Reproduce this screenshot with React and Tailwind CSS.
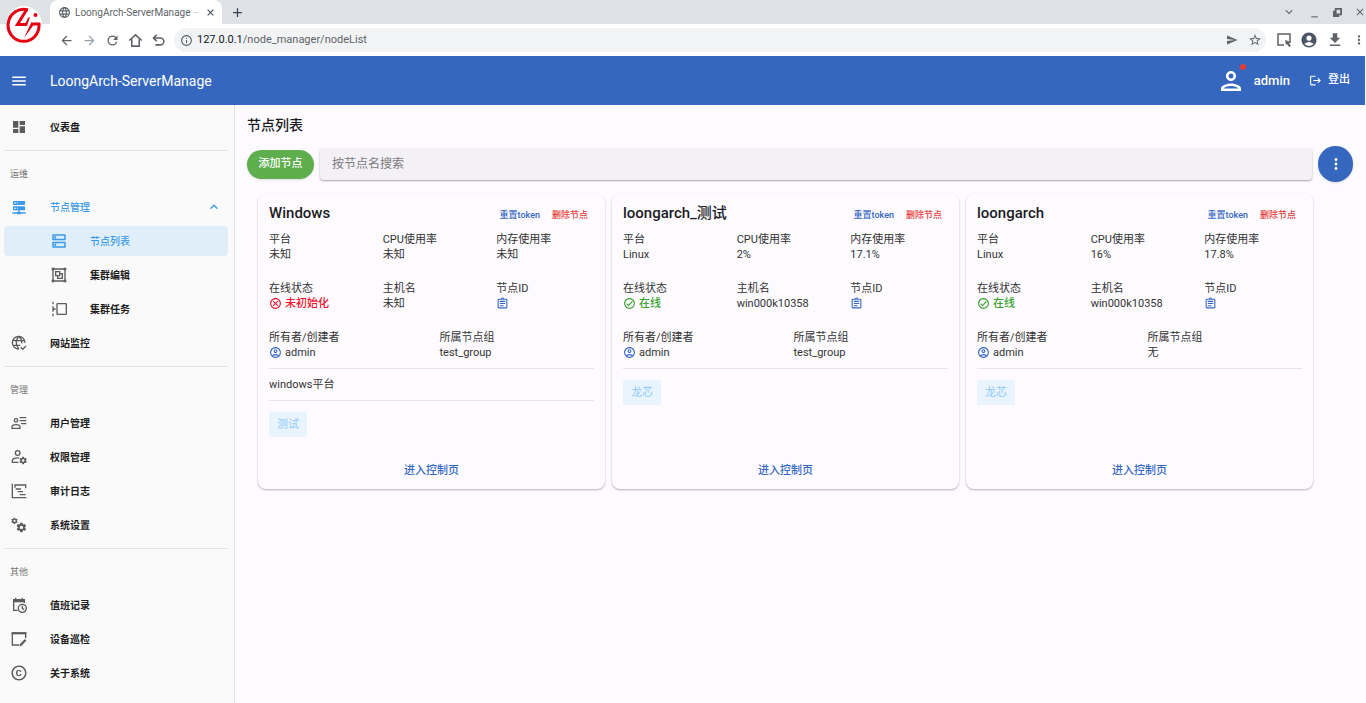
import {
  MdArrowBack,
  MdArrowForward,
  MdRefresh,
  MdInfoOutline,
  MdSend,
  MdStarBorder,
  MdAccountCircle,
  MdDownload,
  MdMoreVert,
  MdMenu,
  MdLanguage,
  MdClose,
  MdAdd,
  MdKeyboardArrowDown,
  MdKeyboardArrowUp,
  MdMinimize,
  MdOutlinePerson,
  MdOutlineAccountCircle,
  MdOutlineAssignment,
  MdOutlineCheckCircle,
  MdOutlineCancel,
  MdOutlineDns,
  MdCopyright,
  MdLogout,
} from "react-icons/md";

const paths = {
  dashboard: "M13,3V9H21V3M13,21H21V11H13M3,21H11V15H3M3,13H11V3H3V13Z",
  server:
    "M13,19H14A1,1 0 0,1 15,20H22V22H15A1,1 0 0,1 14,23H10A1,1 0 0,1 9,22H2V20H9A1,1 0 0,1 10,19H11V17H4A1,1 0 0,1 3,16V12A1,1 0 0,1 4,11H20A1,1 0 0,1 21,12V16A1,1 0 0,1 20,17H13V19M4,3H20A1,1 0 0,1 21,4V8A1,1 0 0,1 20,9H4A1,1 0 0,1 3,8V4A1,1 0 0,1 4,3M9,7H10V5H9V7M9,15H10V13H9V15M5,5V7H7V5H5M5,13V15H7V13H5Z",
  group:
    "M1,1V5H2V19H1V23H5V22H19V23H23V19H22V5H23V1H19V2H5V1M5,4H19V5H20V19H19V20H5V19H4V5H5M6,6V14H9V18H18V9H14V6M8,8H12V12H8M14,11H16V16H11V14H14",
  gear:
    "M19.4 13c0-.3.1-.6.1-1s0-.7-.1-1l2.1-1.6c.2-.2.2-.4.1-.7l-2-3.4c-.1-.2-.4-.3-.6-.2l-2.5 1c-.5-.4-1.1-.7-1.7-1l-.4-2.6c0-.3-.2-.4-.5-.4h-4c-.3 0-.5.1-.5.4L9 5.1c-.6.3-1.2.6-1.7 1l-2.5-1c-.2-.1-.5 0-.6.2l-2 3.4c-.1.2-.1.5.1.7L4.500 11c-.1.3-.1.6-.1 1s0 .7.1 1l-2.200 1.600c-.2.2-.2.4-.1.7l2 3.4c.1.2.4.3.6.2l2.5-1c.5.4 1.1.7 1.7 1l.4 2.6c0 .3.2.4.5.4h4c.3 0 .5-.1.5-.4l.4-2.6c.6-.3 1.2-.6 1.7-1l2.5 1c.2.1.5 0 .6-.2l2-3.4c.1-.2.1-.5-.1-.7zM12 15.500a3.500 3.500 0 1 1 0-7 3.500 3.500 0 0 1 0 7z",
};

const navIcons = {
  dashboard: <path d={paths.dashboard} />,
  server: <path d={paths.server} />,
  group: <path fillRule="evenodd" d={paths.group} />,
  task: (
    <g fill="none" stroke="currentColor" strokeWidth="2">
      <path d="M3 1v4M3 8v8M3 19v4M3 12h4" />
      <rect x="9" y="4" width="14" height="16" rx="1" />
    </g>
  ),
  web: (
    <g fill="none" stroke="currentColor" strokeWidth="2">
      <path d="M12 21A9.500 9.500 0 1 1 21 12M2.500 8.500h18M2.500 15.500H14M12 2c-5.500 5.500-5.500 13.500 0 19M12 2c3 3 4.500 6.500 4.200 10.500" />
      <path d="M14.500 18.500l3 3 5-5" />
    </g>
  ),
  users: (
    <g fill="none" stroke="currentColor" strokeWidth="2">
      <circle cx="7.500" cy="8" r="2.600" />
      <path d="M1.500 20v-2c0-2 3-3.500 6-3.500s6 1.500 6 3.500v2zM13 4h10M13 8.500h10M15 13h8" />
    </g>
  ),
  roles: (
    <>
      <g fill="none" stroke="currentColor" strokeWidth="2">
        <circle cx="10" cy="6" r="3.500" />
        <path d="M12 13.500c-5-.8-10 1-10 3.500v3h9" />
      </g>
      <path transform="translate(11.500 10.500) scale(.56)" fillRule="evenodd" d={paths.gear} />
    </>
  ),
  audit: (
    <path
      fill="none"
      stroke="currentColor"
      strokeWidth="2"
      d="M2 1v21h21M6 7V3h16v5M7 9h8M10 13h8M13 17.500h9"
    />
  ),
  cogs: (
    <>
      <path transform="translate(-.5 0) scale(.48)" fillRule="evenodd" d={paths.gear} />
      <path transform="translate(7 7) scale(.72)" fillRule="evenodd" d={paths.gear} />
    </>
  ),
  calendar: (
    <>
      <path d="M3 3h3V1h2v2h8V1h2v2h3v5H3z" />
      <g fill="none" stroke="currentColor" strokeWidth="2">
        <path d="M20 9V4H4v16h6" />
        <circle cx="17" cy="17" r="6" />
        <path d="M17 13v4.500l3 1.500" />
      </g>
    </>
  ),
  inspect: (
    <>
      <path d="M1 2h22v3H1z" />
      <path fill="none" stroke="currentColor" strokeWidth="2" d="M22 11V3H2v18h10" />
      <path d="M13 23v-3l8-8 2 2.500-8 8.500z" />
    </>
  ),
};

function NavIcon({ name }) {
  if (name === "dns") return <MdOutlineDns size={18} />;
  if (name === "copyright") return <MdCopyright size={18} />;
  return (
    <svg viewBox="0 0 24 24" className="size-4" fill="currentColor">
      {navIcons[name]}
    </svg>
  );
}

const sections = [
  { items: [{ icon: "dashboard", text: "仪表盘" }] },
  {
    title: "运维",
    items: [
      { icon: "server", text: "节点管理", open: true },
      { icon: "dns", text: "节点列表", child: true, active: true },
      { icon: "group", text: "集群编辑", child: true },
      { icon: "task", text: "集群任务", child: true },
      { icon: "web", text: "网站监控" },
    ],
  },
  {
    title: "管理",
    items: [
      { icon: "users", text: "用户管理" },
      { icon: "roles", text: "权限管理" },
      { icon: "audit", text: "审计日志" },
      { icon: "cogs", text: "系统设置" },
    ],
  },
  {
    title: "其他",
    items: [
      { icon: "calendar", text: "值班记录" },
      { icon: "inspect", text: "设备巡检" },
      { icon: "copyright", text: "关于系统" },
    ],
  },
];

const nodes = [
  {
    name: "Windows",
    platform: "未知",
    cpu: "未知",
    memory: "未知",
    online: false,
    host: "未知",
    group: "test_group",
    description: "windows平台",
    tag: "测试",
  },
  {
    name: "loongarch_测试",
    platform: "Linux",
    cpu: "2%",
    memory: "17.1%",
    online: true,
    host: "win000k10358",
    group: "test_group",
    tag: "龙芯",
  },
  {
    name: "loongarch",
    platform: "Linux",
    cpu: "16%",
    memory: "17.8%",
    online: true,
    host: "win000k10358",
    group: "无",
    tag: "龙芯",
  },
];

function Logo() {
  return (
    <svg viewBox="0 0 36 38" className="absolute top-[6px] left-[6px] h-[38px] w-9">
      <ellipse cx="18" cy="19" rx="18" ry="19" fill="#fff" />
      <g fill="none" stroke="#e60012" strokeWidth="3">
        <path d="M22 4A15.500 16 0 1 0 33 18H25" />
        <path d="M21 3L11.500 18.500H21" />
      </g>
      <path d="M22 12l2-1-3 9h-3zM25 17h4L18 32z" fill="#e60012" />
      <circle cx="29.500" cy="9" r="2" fill="#e60012" />
    </svg>
  );
}

function BrowserBar() {
  return (
    <div className="relative text-[#5f6368]">
      <div className="flex h-6 items-center bg-[#dee1e6] pl-[50px]">
        <div className="flex h-6 w-[172px] items-center rounded-t-lg bg-white pr-1.5 pl-2">
          <MdLanguage size={13} className="shrink-0" />
          <span className="ml-1 flex-1 overflow-hidden text-[10px] whitespace-nowrap">
            LoongArch-ServerManage <span className="text-gray-300">–</span>
          </span>
          <button aria-label="关闭标签页" className="text-gray-700">
            <MdClose size={11} />
          </button>
        </div>
        <button aria-label="新标签页" className="ml-2 text-gray-700">
          <MdAdd size={15} />
        </button>
        <div className="ml-auto flex items-center gap-3">
          <MdKeyboardArrowDown size={14} />
          <MdMinimize size={13} />
          <svg viewBox="0 0 10 10" className="size-[9px]" fill="none" stroke="currentColor" strokeWidth="2">
            <path d="M3 1h6v6H3zM1 3v6h6" />
          </svg>
          <MdClose size={12} />
        </div>
      </div>
      <div className="flex h-8 items-center bg-white pl-[59px]">
        <div className="flex items-center gap-2">
          <button aria-label="后退">
            <MdArrowBack size={15} />
          </button>
          <button aria-label="前进" className="text-gray-400">
            <MdArrowForward size={15} />
          </button>
          <button aria-label="刷新">
            <MdRefresh size={15} />
          </button>
          <button aria-label="主页">
            <svg viewBox="0 0 24 24" className="size-[15px]" fill="none" stroke="currentColor" strokeWidth="2.500">
              <path d="M2 12L12 3l10 9M6 10v11h12V10" />
            </svg>
          </button>
          <button aria-label="撤销">
            <svg viewBox="0 0 24 24" className="size-[15px]" fill="none" stroke="currentColor" strokeWidth="2.500">
              <path d="M9 3L4 8l5 5M4 8h11a5.500 5.500 0 0 1 0 11H7" />
            </svg>
          </button>
        </div>
        <div className="ml-2 flex h-6 flex-1 items-center rounded-full bg-[#f1f3f4] pr-1 pl-1.5">
          <MdInfoOutline size={13} />
          <span className="ml-1 flex-1 text-[11px]">
            <span className="text-gray-900">127.0.0.1</span>/node_manager/nodeList
          </span>
          <MdSend size={12} />
          <MdStarBorder size={14} className="ml-2.5" />
        </div>
        <div className="ml-2.5 flex items-center gap-2">
          <svg viewBox="0 0 16 16" className="size-4" fill="none" stroke="currentColor" strokeWidth="1.500">
            <path d="M8 13H2V2h12v9" />
            <path d="M9 8l6 2-2 1 2 3-2 1-2-3-1 1z" fill="currentColor" stroke="none" />
          </svg>
          <MdAccountCircle size={18} className="text-[#4a5568]" />
          <MdDownload size={18} />
          <MdMoreVert size={14} />
        </div>
      </div>
      <Logo />
    </div>
  );
}

function Header() {
  return (
    <header className="mr-px flex h-[49px] items-center bg-[#3567bf] pr-[15px] pl-[10px] text-white">
      <button aria-label="菜单">
        <MdMenu size={18} />
      </button>
      <h1 className="ml-[22px] text-sm">LoongArch-ServerManage</h1>
      <div className="relative ml-auto">
        <MdOutlinePerson size={30} />
        <span className="absolute -top-0.5 right-0 size-1.5 rounded-full bg-[#e53935]" />
      </div>
      <span className="ml-2 text-[13px] font-medium">admin</span>
      <button className="ml-[19px] flex items-center gap-1.5 text-[11px] font-medium">
        <MdLogout size={13} />
        登出
      </button>
    </header>
  );
}

function Sidebar() {
  return (
    <nav className="w-[235px] shrink-0 border-r border-[#e2e2e5] bg-[#fafafa] pt-[5px] pr-1.5 pl-1">
      {sections.map((section, i) => (
        <div key={i}>
          {i > 0 && <hr className="mt-1.5 mb-[5px] border-[#e4e4e4]" />}
          {section.title && (
            <h2 className="flex h-[34px] items-center pt-1 pl-1.5 text-[9px] text-[#757575]">
              {section.title}
            </h2>
          )}
          <ul>
            {section.items.map((item) => (
              <li key={item.text} className="h-[34px] py-[2px]">
                <a
                  href="#"
                  className={`flex h-full items-center rounded-sm pr-1.5 ${item.child ? "pl-[46px]" : "pl-1.5"} ${
                    item.active ? "bg-[#dfeef8]" : ""
                  } ${item.active || item.open ? "text-[#3b9be8]" : "text-[#5c5c5c]"}`}
                >
                  <span className="flex w-[18px] justify-center">
                    <NavIcon name={item.icon} />
                  </span>
                  <span
                    className={`ml-[22px] flex-1 text-[10px] ${
                      item.active || item.open ? "font-medium" : "font-bold text-[#1c1c1c]"
                    }`}
                  >
                    {item.text}
                  </span>
                  {item.open && <MdKeyboardArrowUp size={16} />}
                </a>
              </li>
            ))}
          </ul>
        </div>
      ))}
    </nav>
  );
}

function Field({ label, children }) {
  return (
    <div>
      <dt>{label}</dt>
      <dd className="flex h-[15px] items-center gap-[3px]">{children}</dd>
    </div>
  );
}

function NodeCard({ node }) {
  return (
    <article className="flex min-h-[295px] flex-col rounded-lg bg-[#fdfbff] px-[11px] pt-2 pb-[7px] text-[11px] leading-[15px] text-[#333] shadow-[0_1px_2px_rgba(0,0,0,0.3)]">
      <div className="flex h-[22px] items-baseline">
        <h3 className="flex-1 text-[15px] leading-[22px] font-medium text-[#1b1b1f]">{node.name}</h3>
        <button className="text-[9px] font-medium text-[#3567bf]">重置token</button>
        <button className="mr-1.5 ml-3 text-[9px] font-medium text-[#e53935]">删除节点</button>
      </div>
      <dl className="mt-2 grid grid-cols-3 gap-x-4 gap-y-[19px]">
        <Field label="平台">{node.platform}</Field>
        <Field label="CPU使用率">{node.cpu}</Field>
        <Field label="内存使用率">{node.memory}</Field>
        <Field label="在线状态">
          {node.online ? (
            <span className="flex items-center gap-[3px] font-medium text-[#3aa12e]">
              <MdOutlineCheckCircle size={13} />
              在线
            </span>
          ) : (
            <span className="flex items-center gap-[3px] font-medium text-[#f0142f]">
              <MdOutlineCancel size={13} />
              未初始化
            </span>
          )}
        </Field>
        <Field label="主机名">{node.host}</Field>
        <Field label="节点ID">
          <button aria-label="复制节点ID" className="text-[#3567bf]">
            <MdOutlineAssignment size={13} />
          </button>
        </Field>
      </dl>
      <dl className="mt-[19px] grid grid-cols-2 gap-x-4">
        <Field label="所有者/创建者">
          <MdOutlineAccountCircle size={13} className="text-[#3567bf]" />
          admin
        </Field>
        <Field label="所属节点组">{node.group}</Field>
      </dl>
      <hr className="mt-2 border-[#e6e4e9]" />
      {node.description && (
        <>
          <p className="my-2">{node.description}</p>
          <hr className="border-[#e6e4e9]" />
        </>
      )}
      <span className="mt-[11px] flex h-[25px] items-center self-start rounded-xs bg-[#eaf4fe] px-2 text-[#90caf9]">
        {node.tag}
      </span>
      <button className="mt-auto h-6 self-center px-3 font-medium text-[#3567bf]">进入控制页</button>
    </article>
  );
}

export default function App() {
  return (
    <div className="flex min-h-screen flex-col bg-[#fdfbff] font-[Roboto,'Noto_Sans_CJK_SC',sans-serif]">
      <BrowserBar />
      <Header />
      <div className="flex flex-1">
        <Sidebar />
        <main className="flex-1 pt-2 pr-[13px] pl-3">
          <h2 className="text-sm leading-6 font-medium text-[#1b1b1f]">节点列表</h2>
          <div className="mt-[9px] flex items-center">
            <button className="h-[29px] w-[67px] rounded-full bg-[#5eae4e] text-[11px] font-medium text-white shadow-sm">
              添加节点
            </button>
            <input
              type="text"
              aria-label="按节点名搜索"
              placeholder="按节点名搜索"
              className="ml-1.5 h-8 flex-1 rounded bg-[#f3f1f5] px-3 text-xs shadow-[0_1px_2px_rgba(0,0,0,0.35)] outline-none placeholder:text-[#7b7a7e]"
            />
            <button
              aria-label="更多操作"
              className="ml-1.5 flex h-9 w-[35px] items-center justify-center rounded-full bg-[#3567bf] text-white shadow"
            >
              <MdMoreVert size={18} />
            </button>
          </div>
          <div className="mt-3 mr-10 ml-[11px] grid grid-cols-3 gap-[7px]">
            {nodes.map((node) => (
              <NodeCard key={node.name} node={node} />
            ))}
          </div>
        </main>
      </div>
    </div>
  );
}
